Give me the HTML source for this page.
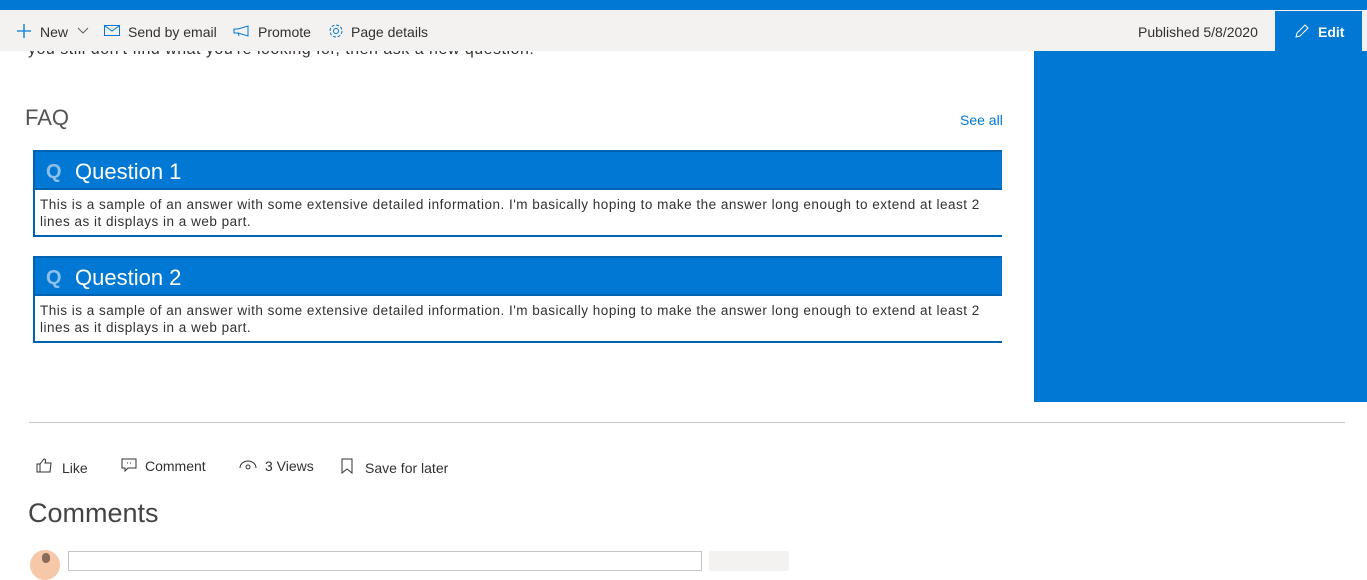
<!DOCTYPE html>
<html><head><style>
*{margin:0;padding:0;box-sizing:border-box}
body{width:1367px;height:560px;overflow:hidden;background:#fff;font-family:"Liberation Sans",sans-serif;color:#323130;position:relative}
.a{position:absolute}
.tb{top:10px;left:0;width:1367px;height:41px;background:#f3f2f1;font-size:14px;color:#323130}
.tb span{position:absolute;top:14px;white-space:nowrap}
.q{left:33px;width:969px;border:2px solid #0063b1;border-right:none;background:#fff}
.qh{height:38px;background:#0078d4;color:#fff;font-size:22px;line-height:40px;padding-left:40px;position:relative;border-bottom:2px solid #0063b1}
.qh b{position:absolute;left:11px;top:0;color:#8fbfe8;font-size:20px}
.qa{font-size:13.5px;letter-spacing:0.5px;line-height:17px;padding:6px 0 5px 5px;color:#323130;white-space:nowrap}
.act{top:458px;font-size:14px;white-space:nowrap}
</style></head><body>
<div class="a" style="top:0;left:0;width:1367px;height:10px;background:#0078d4"></div>
<div class="a" style="top:41px;left:28px;font-size:16px;letter-spacing:0.5px;color:#323130;white-space:nowrap">you still don't find what you're looking for, then ask a new question!</div>
<div class="a tb">
<svg class="a" style="left:16px;top:13px" width="16" height="16"><path d="M8 1v14M1 8h14" stroke="#0078d4" stroke-width="1.3"/></svg>
<span style="left:40px">New</span>
<svg class="a" style="left:77px;top:17px" width="12" height="8"><path d="M1 1l5 5 5-5" stroke="#605e5c" fill="none"/></svg>
<svg class="a" style="left:104px;top:15px" width="16" height="12"><rect x=".5" y=".5" width="15" height="10" stroke="#0078d4" fill="none"/><path d="M1 1l7 5 7-5" stroke="#0078d4" fill="none"/></svg>
<span style="left:128px">Send by email</span>
<svg class="a" style="left:233px;top:15px" width="18" height="12"><path d="M1 4h4l10-3v10L5 8H1z M5 8l1 3" stroke="#0078d4" fill="none"/></svg>
<span style="left:258px">Promote</span>
<svg class="a" style="left:328px;top:13px" width="16" height="16"><circle cx="8" cy="8" r="2.5" stroke="#0078d4" fill="none"/><circle cx="8" cy="8" r="6" stroke="#0078d4" fill="none" stroke-dasharray="3 1.7"/></svg>
<span style="left:351px">Page details</span>
<span style="left:1138px">Published 5/8/2020</span>
</div>
<div class="a" style="left:1275px;top:11px;width:87px;height:40px;background:#0078d4;color:#fff;font-size:14px;font-weight:bold">
<svg class="a" style="left:19px;top:13px" width="15" height="15"><path d="M2 13l1-4 8-8 3 3-8 8z" stroke="#fff" fill="none"/></svg>
<span class="a" style="left:43px;top:13px">Edit</span></div>
<div class="a" style="left:1034px;top:51px;width:333px;height:351px;background:#0078d4"></div>
<div class="a" style="left:25px;top:105px;font-size:22px;color:#555">FAQ</div>
<div class="a" style="left:960px;top:112px;font-size:14px;color:#0078d4">See all</div>
<div class="a q" style="top:150px"><div class="qh"><b>Q</b>Question 1</div><div class="qa">This is a sample of an answer with some extensive detailed information. I'm basically hoping to make the answer long enough to extend at least 2<br>lines as it displays in a web part.</div></div>
<div class="a q" style="top:256px"><div class="qh"><b>Q</b>Question 2</div><div class="qa">This is a sample of an answer with some extensive detailed information. I'm basically hoping to make the answer long enough to extend at least 2<br>lines as it displays in a web part.</div></div>
<div class="a" style="left:29px;top:422px;width:1316px;height:1px;background:#c8c6c4"></div>
<svg class="a" style="left:36px;top:458px" width="17" height="15"><path d="M1 6h3v8H1z M4 6l4-5c2 0 2 2 1 4h6l-1 9H4" stroke="#323130" fill="none"/></svg>
<span class="a act" style="left:62px;top:460px">Like</span>
<svg class="a" style="left:121px;top:458px" width="16" height="14"><path d="M1 1h14v9H7l-3 3v-3H1z" stroke="#323130" fill="none"/><path d="M6 5h1M9 5h1" stroke="#323130"/></svg>
<span class="a act" style="left:145px">Comment</span>
<svg class="a" style="left:239px;top:460px" width="18" height="10"><path d="M1 8a8 7 0 0 1 16 0" stroke="#323130" fill="none"/><circle cx="9" cy="7" r="2" stroke="#323130" fill="none"/></svg>
<span class="a act" style="left:265px">3 Views</span>
<svg class="a" style="left:341px;top:458px" width="12" height="16"><path d="M1 1h10v14l-5-4-5 4z" stroke="#323130" fill="none"/></svg>
<span class="a act" style="left:365px;top:460px">Save for later</span>
<div class="a" style="left:28px;top:498px;font-size:27px;color:#444">Comments</div>
<div class="a" style="left:30px;top:550px;width:30px;height:30px;border-radius:50%;background:#f6c7a8"></div>
<div class="a" style="left:42px;top:553px;width:8px;height:10px;border-radius:4px;background:#8a6a58"></div>
<div class="a" style="left:68px;top:551px;width:634px;height:20px;border:1px solid #c8c6c4"></div>
<div class="a" style="left:709px;top:551px;width:80px;height:20px;background:#f3f2f1;border-radius:2px"></div>
</body></html>
